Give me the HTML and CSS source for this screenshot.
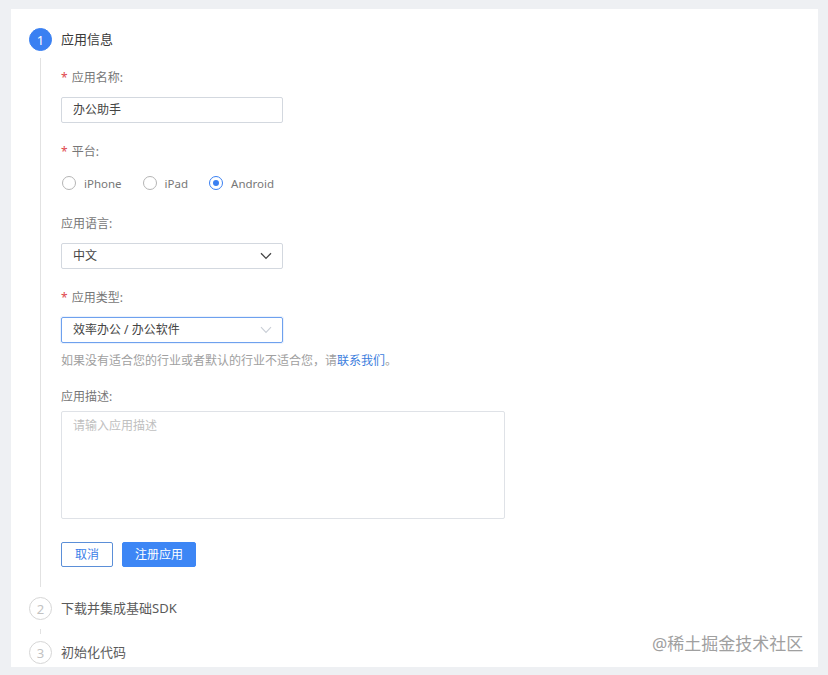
FILE: index.html
```html
<!DOCTYPE html>
<html lang="zh-CN">
<head>
<meta charset="utf-8">
<title>应用信息</title>
<link rel="stylesheet" href="styles.css">
</head>
<body>
<div class="card">
  <div class="step">
    <div class="rail">
      <div class="dot dot-active">1</div>
      <div class="line line-long"></div>
    </div>
    <div class="content">
      <div class="step-title">应用信息</div>
      <form class="form">
        <div class="field f1">
          <div class="label"><span class="req">*</span>应用名称:</div>
          <div class="input">办公助手</div>
        </div>
        <div class="field">
          <div class="label"><span class="req">*</span>平台:</div>
          <div class="radios">
            <span class="radio"><span class="ring"></span>iPhone</span>
            <span class="radio"><span class="ring"></span>iPad</span>
            <span class="radio"><span class="ring ring-on"></span>Android</span>
          </div>
        </div>
        <div class="field">
          <div class="label">应用语言:</div>
          <div class="input select">中文
            <svg class="chev" width="12" height="8" viewBox="0 0 12 8"><path d="M1 1.2 L6 6.4 L11 1.2" fill="none" stroke="#444" stroke-width="1.3"/></svg>
          </div>
        </div>
        <div class="field">
          <div class="label"><span class="req">*</span>应用类型:</div>
          <div class="input select focus">效率办公 / 办公软件
            <svg class="chev" width="12" height="8" viewBox="0 0 12 8"><path d="M1 1.2 L6 6.4 L11 1.2" fill="none" stroke="#c9ced6" stroke-width="1.1"/></svg>
          </div>
          <div class="hint">如果没有适合您的行业或者默认的行业不适合您，请<a class="link">联系我们</a>。</div>
        </div>
        <div class="field f5">
          <div class="label">应用描述:</div>
          <div class="textarea">请输入应用描述</div>
        </div>
        <div class="actions">
          <span class="btn btn-ghost">取消</span>
          <span class="btn btn-primary">注册应用</span>
        </div>
      </form>
    </div>
  </div>
  <div class="step">
    <div class="rail">
      <div class="dot">2</div>
      <div class="line line-short"></div>
    </div>
    <div class="content">
      <div class="step-title muted">下载并集成基础SDK</div>
    </div>
  </div>
  <div class="step">
    <div class="rail">
      <div class="dot">3</div>
    </div>
    <div class="content">
      <div class="step-title muted">初始化代码</div>
    </div>
  </div>
</div>
<div class="watermark">@稀土掘金技术社区</div>
</body>
</html>
```

FILE: styles.css
```css
html, body {
  margin: 0;
  padding: 0;
}
body {
  background: #eef0f3;
  font-family: "Noto Sans", "Noto Sans CJK SC", sans-serif;
  width: 828px;
  height: 675px;
  overflow: hidden;
  position: relative;
}
.card {
  background: #fff;
  margin: 9px 10px 0 11px;
  height: 658px;
  box-sizing: border-box;
  padding: 19px 0 0 18px;
}
.step {
  display: flex;
  gap: 9px;
}
.rail {
  width: 23px;
  display: flex;
  flex-direction: column;
  align-items: center;
  flex-shrink: 0;
}
.dot {
  width: 23px;
  height: 23px;
  box-sizing: border-box;
  border-radius: 50%;
  border: 1px solid #d6d6d6;
  color: #c2c2c2;
  font-size: 13px;
  display: flex;
  align-items: center;
  justify-content: center;
  flex-shrink: 0;
}
.dot-active {
  background: #3a80f2;
  border-color: #3a80f2;
  color: #fff;
}
.line {
  width: 1px;
  background: #e2e2e2;
  flex: 1;
}
.line-long {
  margin: 7px 0 10px;
}
.line-short {
  margin: 9px 0 7px;
  min-height: 5px;
}
.content {
  flex: 1;
}
.step-title {
  font-size: 13px;
  line-height: 23px;
  color: #3a3a3a;
}
.step-title.muted {
  color: #5a5a5a;
}
.form {
  padding-bottom: 30px;
}
.field {
  margin-top: 19px;
}
.field.f1 {
  margin-top: 17px;
}
.field.f5 {
  margin-top: 16px;
}
.label {
  font-size: 12px;
  line-height: 20px;
  color: #777;
  margin-bottom: 9px;
}
.f5 .label {
  margin-bottom: 4px;
}
.req {
  color: #e0474d;
  margin-right: 4px;
}
.input {
  width: 222px;
  height: 26px;
  box-sizing: border-box;
  border: 1px solid #d3d8df;
  border-radius: 2px;
  padding: 0 11px;
  font-size: 12px;
  line-height: 24px;
  color: #444;
  display: flex;
  align-items: center;
  justify-content: space-between;
}
.select.focus {
  border-color: #6ea1ee;
  box-shadow: 0 0 0 1px rgba(90, 150, 240, 0.12);
}
.chev {
  margin-right: -1px;
}
.radios {
  display: flex;
  align-items: center;
  height: 24px;
  padding-left: 1px;
}
.radio {
  display: flex;
  align-items: center;
  font-size: 11.5px;
  color: #777;
  margin-right: 21px;
}
.ring {
  width: 14px;
  height: 14px;
  box-sizing: border-box;
  border: 1px solid #b5b5b5;
  border-radius: 50%;
  margin-right: 8px;
  position: relative;
}
.ring-on {
  border-color: #3a80f2;
}
.ring-on::after {
  content: "";
  position: absolute;
  left: 3px;
  top: 3px;
  width: 6px;
  height: 6px;
  border-radius: 50%;
  background: #3a80f2;
}
.hint {
  font-size: 12px;
  line-height: 20px;
  color: #a0a0a0;
  margin-top: 8px;
}
.link {
  color: #3b7ddd;
}
.textarea {
  width: 444px;
  height: 108px;
  box-sizing: border-box;
  border: 1px solid #dfe2e7;
  border-radius: 2px;
  padding: 4px 11px;
  font-size: 12px;
  line-height: 20px;
  color: #c0c0c0;
}
.actions {
  margin-top: 23px;
  display: flex;
  gap: 9px;
}
.btn {
  height: 25px;
  box-sizing: border-box;
  font-size: 12px;
  line-height: 23px;
  text-align: center;
  border-radius: 2px;
  border: 1px solid #3d86f5;
}
.btn-ghost {
  width: 52px;
  color: #3a7ee8;
  border-color: #5b8fd8;
  background: #fff;
}
.btn-primary {
  width: 74px;
  background: #3d86f5;
  color: #fff;
}
.watermark {
  position: absolute;
  left: 652px;
  top: 633px;
  font-size: 17px;
  line-height: 22px;
  color: #a0a0a0;
}
```
